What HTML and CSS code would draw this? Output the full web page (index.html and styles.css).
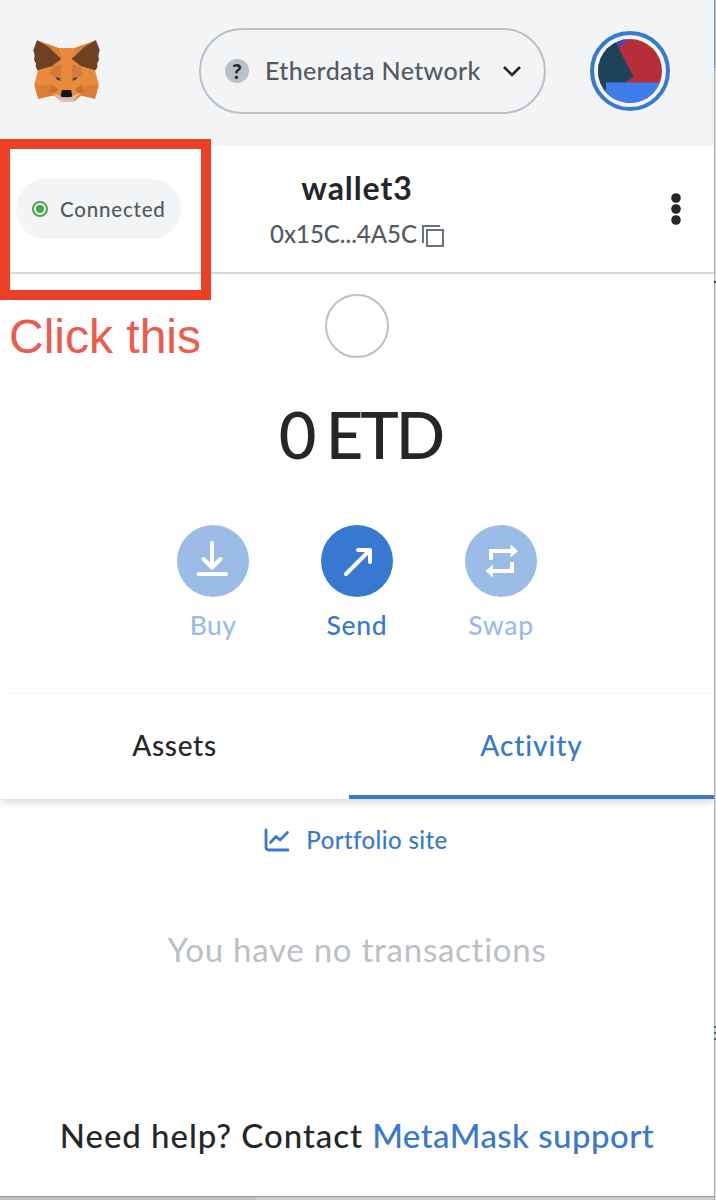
FILE: index.html
```html
<!DOCTYPE html>
<html lang="en">
<head>
<meta charset="utf-8">
<title>MetaMask</title>
<link rel="stylesheet" href="styles.css">
</head>
<body>
<div class="popup">
  <header class="header">
    <svg class="fox" width="100" height="90" viewBox="0 0 300 270">
      <path fill="#e88b3a" d="M51 46L113 69H165L228 46L232 130L225 136L236 178L225 221L184 211L164 229H122L102 211L55 221L43 178L54 136Z"/>
      <path fill="#dc7f36" d="M51 46L116 69L126 103L88 82ZM228 46L165 69L154 103L192 82ZM43 181L98 180L84 202L104 210L55 221ZM236 181L180 180L196 202L176 210L225 221Z"/>
      <path fill="#d47b3a" d="M99 124L124 118V166L88 148ZM180 124L155 118V166L191 148Z"/>
      <path fill="#6e4124" d="M51 46L40 75L44 92L42 104L48 116L47 124L52 136L95 124L124 102L86 66ZM228 46L239 75L235 92L237 104L231 116L232 124L227 136L184 124L155 102L193 66Z"/>
      <path fill="#c86f36" d="M98 180L84 202L104 204L115 194ZM181 180L196 202L176 204L165 194Z"/>
      <path fill="#e88b3a" d="M124 112H155V196H124Z"/>
      <path fill="#d6bfb1" d="M102 205L124 213H156L179 205L158 230H122Z"/>
      <path fill="#394452" d="M106 157L118 158L122 167L112 165ZM173 157L161 158L157 167L167 165Z"/>
      <path fill="#c0ad9f" d="M122 213H158L160 219H119Z"/>
      <path fill="#131313" d="M126 195H153L157 213L153 216H126L122 213Z"/>
    </svg>
    <div class="network">
      <span class="network-badge">?</span>
      <span class="network-name">Etherdata Network</span>
      <svg width="22" height="14" viewBox="0 0 22 14"><path d="M3 3L11 11L19 3" fill="none" stroke="#24272a" stroke-width="2.6"/></svg>
    </div>
    <div class="account">
      <svg width="64" height="64" viewBox="0 0 64 64">
        <defs><clipPath id="disc"><circle cx="32" cy="32" r="32"/></clipPath></defs>
        <g clip-path="url(#disc)">
          <path fill="#b72e3b" d="M0 0H64V64H0Z"/>
          <path fill="#2b48dc" d="M14 0H30L21 8Z"/>
          <path fill="#1d435b" d="M0 0H16L35.500 38L26 44L8 64H0Z"/>
          <path fill="#3f7cec" d="M8 43.500H64V64H8Z"/>
        </g>
      </svg>
    </div>
  </header>

  <section class="menu-bar">
    <div class="status"><i class="status-dot"></i><span class="status-text">Connected</span></div>
    <div class="selected">
      <div class="wallet">wallet3</div>
      <div class="address"><span class="address-text">0x15C...4A5C</span>
        <svg width="22" height="22" viewBox="0 0 22 22" fill="none" stroke="#6a737d" stroke-width="2"><path d="M1 18V1H18"/><path d="M5 5H21V21H5Z"/></svg>
      </div>
    </div>
    <svg class="dots" width="12" height="34" viewBox="0 0 12 34" fill="#24272a"><circle cx="6" cy="6" r="4.800"/><circle cx="6" cy="17" r="4.800"/><circle cx="6" cy="28" r="4.800"/></svg>
    <div class="highlight"></div>
    <div class="caption">Click this</div>
  </section>

  <main class="overview">
    <div class="token"></div>
    <div class="balance">0 ETD</div>
    <div class="actions">
      <div class="action faded">
        <svg width="72" height="72" viewBox="0 0 72 72" fill="none" stroke="#fff" stroke-width="4" stroke-linecap="round" stroke-linejoin="round"><path d="M35 18V42M26.500 34L35 42.500L43.500 34M21.500 49H49"/></svg>
        <span class="buy">Buy</span>
      </div>
      <div class="action">
        <svg width="72" height="72" viewBox="0 0 72 72" fill="none" stroke="#fff" stroke-width="4" stroke-linecap="round" stroke-linejoin="round"><path d="M25 49L48 26M37 25H49V37"/></svg>
        <span class="send">Send</span>
      </div>
      <div class="action faded">
        <svg width="72" height="72" viewBox="0 0 72 72" fill="none" stroke="#fff" stroke-width="4"><path d="M26 35V26H46M47 37V46H27"/><path fill="#fff" stroke="none" d="M45.500 19.500L53 26L45.500 32.500ZM28 39.500L20.500 46L28 52.500Z"/></svg>
        <span class="swap">Swap</span>
      </div>
    </div>
  </main>

  <nav class="tabs">
    <div class="tab"><span class="assets">Assets</span></div>
    <div class="tab active"><span class="activity">Activity</span></div>
  </nav>

  <section class="list">
    <a class="portfolio">
      <svg width="26" height="24" viewBox="0 0 26 24" fill="none" stroke="#3779d0" stroke-width="2.800" stroke-linecap="round" stroke-linejoin="round"><path d="M2 2V19Q2 22 5 22H24"/><path d="M6.500 14.500L12 8.500L16 12L23.500 4.500"/></svg>
      <span class="portfolio-text">Portfolio site</span>
    </a>
    <div class="empty">You have no transactions</div>
    <footer class="help">Need help? Contact <a class="support">MetaMask support</a></footer>
  </section>
</div>
<aside class="edge"><i class="edge-top"></i><i class="edge-tick"></i><i class="edge-marks"></i></aside>
</body>
</html>
```

FILE: styles.css
```css
* { box-sizing: border-box; }
body {
  margin: 0;
  width: 716px;
  height: 1200px;
  display: flex;
  overflow: hidden;
  background: linear-gradient(90deg, #bfc0c4 0 255px, #cbccce 255px);
  font-family: Lato, "Open Sans", sans-serif;
  font-variant-ligatures: none;
  color: #24272a;
  white-space: nowrap;
}
svg { display: block; flex: none; }
.popup {
  width: 714px;
  height: 1197px;
  background: #fff;
  border-bottom: 1px solid #97989b;
}
.header {
  height: 146px;
  background: #f2f4f6;
  display: flex;
  align-items: flex-start;
}
.fox { margin: 25px 0 0 20px; }
.network {
  width: 347px;
  height: 86px;
  margin: 28px 0 0 79px;
  padding-left: 24px;
  border: 2px solid #bbc0c5;
  border-radius: 43px;
  display: flex;
  align-items: center;
}
.network-badge {
  width: 24px;
  height: 24px;
  border-radius: 50%;
  background: #bbc0c5;
  font: 900 21px/24px Lato, sans-serif;
  text-align: center;
}
.network-name {
  width: 217px;
  margin: 0 19px 0 16px;
  padding-bottom: 2px;
  font-size: 25px;
  line-height: 30px;
  font-weight: 500;
  letter-spacing: 0.35px;
  color: #535a61;
}
.account {
  width: 80px;
  height: 80px;
  margin: 31px 0 0 44px;
  padding: 4px;
  border: 4px solid #3779d0;
  border-radius: 50%;
}
.menu-bar {
  position: relative;
  height: 128px;
  border-bottom: 2px solid #d6d9dc;
  display: flex;
}
.status {
  width: 165px;
  height: 60px;
  margin: 33px 0 0 16px;
  padding-left: 16px;
  border-radius: 30px;
  background: #f2f4f6;
  display: flex;
  align-items: center;
  gap: 12px;
}
.status-dot {
  width: 16px;
  height: 16px;
  border: 2px solid #4fa54b;
  border-radius: 50%;
  background: radial-gradient(circle, #4fa54b 3.800px, transparent 4.400px);
}
.status-text { padding-bottom: 1px; font-size: 20.500px; font-weight: 500; letter-spacing: 0.8px; color: #535a61; }
.selected { width: 350px; margin-left: 1px; padding-top: 22px; text-align: center; }
.wallet { font-size: 32px; line-height: 40px; font-weight: 700; letter-spacing: 0.9px; }
.address {
  margin-top: 11px;
  display: flex;
  justify-content: center;
  align-items: center;
  gap: 5px;
  font-size: 24px;
  line-height: 30px;
  font-weight: 500;
  color: #535a61;
}
.address svg { margin-top: 3px; }
.dots { margin: 46px 0 0 138px; }
.highlight {
  position: absolute;
  left: 0;
  top: -7px;
  width: 211px;
  height: 161px;
  border: 10px solid #ea4025;
}
.caption {
  position: absolute;
  left: 9px;
  top: 163px;
  font: 48px/56px "Liberation Sans", sans-serif;
  color: #ed5b4b;
}
.overview { height: 420px; display: flex; flex-direction: column; align-items: center; }
.token { width: 64px; height: 64px; margin-top: 20px; border: 2px solid #bbc0c5; border-radius: 50%; }
.balance {
  margin: 38px 0 0 7px;
  font-size: 65px;
  line-height: 76px;
  font-weight: 500;
  letter-spacing: -3px;
  word-spacing: -1px;
}
.actions { display: flex; margin-top: 53px; }
.action {
  width: 144px;
  display: flex;
  flex-direction: column;
  align-items: center;
  gap: 12px;
  font-size: 26.500px;
  line-height: 32px;
  font-weight: 500;
  letter-spacing: 0.7px;
  color: #3779d0;
}
.action svg { border-radius: 50%; background: #3779d0; }
.faded { color: #9bbce7; }
.faded svg { background: #9bbce7; }
.buy { letter-spacing: 0.3px; }
.tabs {
  height: 105px;
  display: flex;
  box-shadow: 0 3px 8px rgba(0, 0, 0, 0.16);
  clip-path: inset(-1px 0 -14px 0);
}
.tab { width: 349px; padding-top: 34px; text-align: center; font-size: 28px; line-height: 34px; font-weight: 500; letter-spacing: 0.7px; }
.active { width: 365px; border-bottom: 4px solid #3779d0; color: #3779d0; letter-spacing: 0.9px; }
.list { display: flex; flex-direction: column; align-items: center; }
.portfolio { display: flex; align-items: center; gap: 16px; margin: 25px 2px 0 0; font-size: 24px; line-height: 32px; font-weight: 500; letter-spacing: 0.4px; color: #3779d0; }
.empty { margin-top: 73px; font-size: 33px; line-height: 40px; letter-spacing: 0.75px; color: #bbc0c5; }
.help { margin-top: 146px; font-size: 33px; line-height: 40px; font-weight: 500; letter-spacing: 0.95px; }
.support { color: #3779d0; letter-spacing: 0.45px; }
.edge { width: 2px; height: 1200px; background: linear-gradient(90deg, #adadae 1px, #dedede 1px); }
.edge-top { display: block; height: 68px; background: linear-gradient(90deg, #8592ad 1px, #b5c3dc 1px); }
.edge-tick { display: block; height: 2px; margin-top: 213px; background: #414245; }
.edge-marks { display: block; height: 14px; margin-top: 743px; background: repeating-linear-gradient(#3c6e52 0 2px, #ccc 2px 6px); }
```
